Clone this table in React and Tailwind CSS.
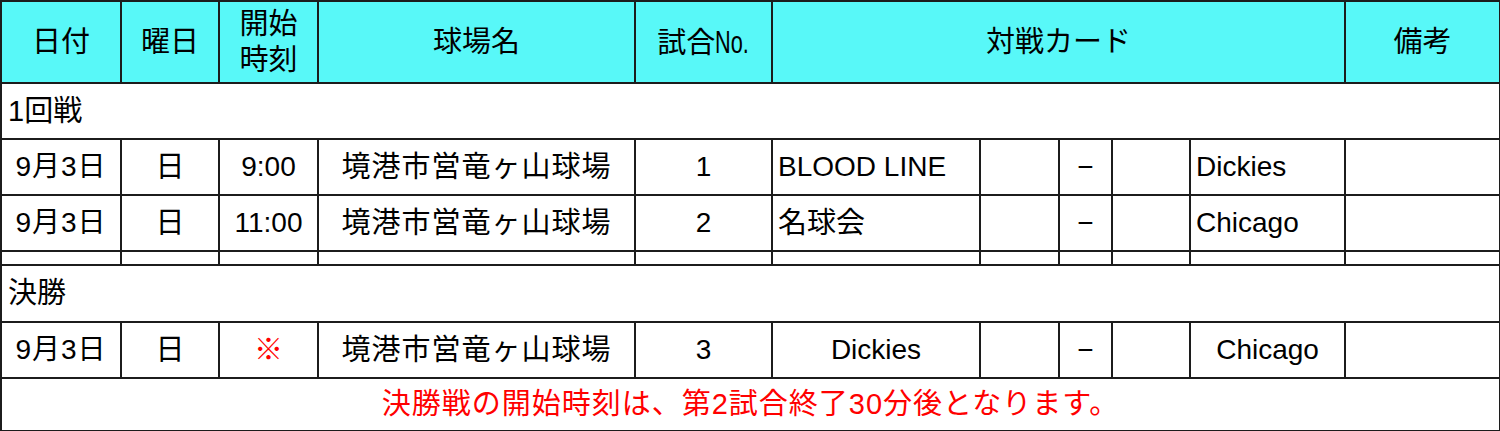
import React from "react";

const FONT = { fontFamily: '"Liberation Sans", "Noto Sans CJK JP", sans-serif' };

const widths = [120, 98, 99, 317, 137, 208, 79, 53, 78, 155, 155];

const games = [
  { date: "9月3日", day: "日", time: "9:00", no: "1", home: "BLOOD LINE", away: "Dickies" },
  { date: "9月3日", day: "日", time: "11:00", no: "2", home: "名球会", away: "Chicago" },
];

const cell = "border-2 border-[#1c1c1c] p-0 align-middle";

function GameRow({ g, centerTeams, red }) {
  const team = centerTeams ? "text-center" : "pl-[5px] text-left";
  return (
    <tr className="h-[56px]">
      <td className={`${cell} text-center tracking-[1px]`}>{g.date}</td>
      <td className={`${cell} text-center text-[29px]`}>{g.day}</td>
      <td className={`${cell} text-center ${red ? "text-[#ff0000] text-[29px]" : ""}`}>{g.time}</td>
      <td className={`${cell} text-center text-[29px] tracking-[1px]`}>境港市営竜ヶ山球場</td>
      <td className={`${cell} text-center`}>{g.no}</td>
      <td className={`${cell} ${team} ${g.home === "名球会" ? "text-[29px]" : ""}`}>{g.home}</td>
      <td className={cell}></td>
      <td className={`${cell} text-center`}>−</td>
      <td className={cell}></td>
      <td className={`${cell} ${team}`}>{g.away}</td>
      <td className={cell}></td>
    </tr>
  );
}

export default function App() {
  return (
    <div className="w-[1500px] h-[431px] bg-white text-black overflow-hidden" style={FONT}>
      <table className="table-fixed border-collapse w-[1500px] text-[28px] leading-none">
        <colgroup>
          {widths.map((w, i) => (
            <col key={i} style={{ width: w }} />
          ))}
        </colgroup>
        <tbody>
          {/* header */}
          <tr className="h-[82px] bg-[#58f8f8] text-[29px]">
            <td className={`${cell} text-center`}>日付</td>
            <td className={`${cell} text-center`}>曜日</td>
            <td className={`${cell} text-center leading-[36px]`}>
              開始
              <br />
              時刻
            </td>
            <td className={`${cell} text-center`}>球場名</td>
            <td className={`${cell} text-center`}>
              試合
              <span className="inline-block origin-left scale-x-[0.7] -mr-[14px] text-[31px]">No.</span>
            </td>
            <td colSpan={5} className={`${cell} text-center`}>対戦カード</td>
            <td className={`${cell} text-center`}>備考</td>
          </tr>

          <tr className="h-[56px]">
            <td colSpan={11} className={`${cell} pl-[6px] text-[29px]`}>1回戦</td>
          </tr>
          {games.map((g, i) => (
            <GameRow key={i} g={g} />
          ))}
          <tr className="h-[14px]">
            {widths.map((w, i) => (
              <td key={i} className={cell}></td>
            ))}
          </tr>

          <tr className="h-[57px]">
            <td colSpan={11} className={`${cell} pl-[6px] text-[29px]`}>決勝</td>
          </tr>
          <GameRow
            g={{ date: "9月3日", day: "日", time: "※", no: "3", home: "Dickies", away: "Chicago" }}
            centerTeams
            red
          />
          <tr className="h-[53px]">
            <td colSpan={11} className={`${cell} text-center text-[#ff0000] text-[29px] tracking-[1px]`}>
              決勝戦の開始時刻は、第2試合終了30分後となります。
            </td>
          </tr>
        </tbody>
      </table>
    </div>
  );
}
